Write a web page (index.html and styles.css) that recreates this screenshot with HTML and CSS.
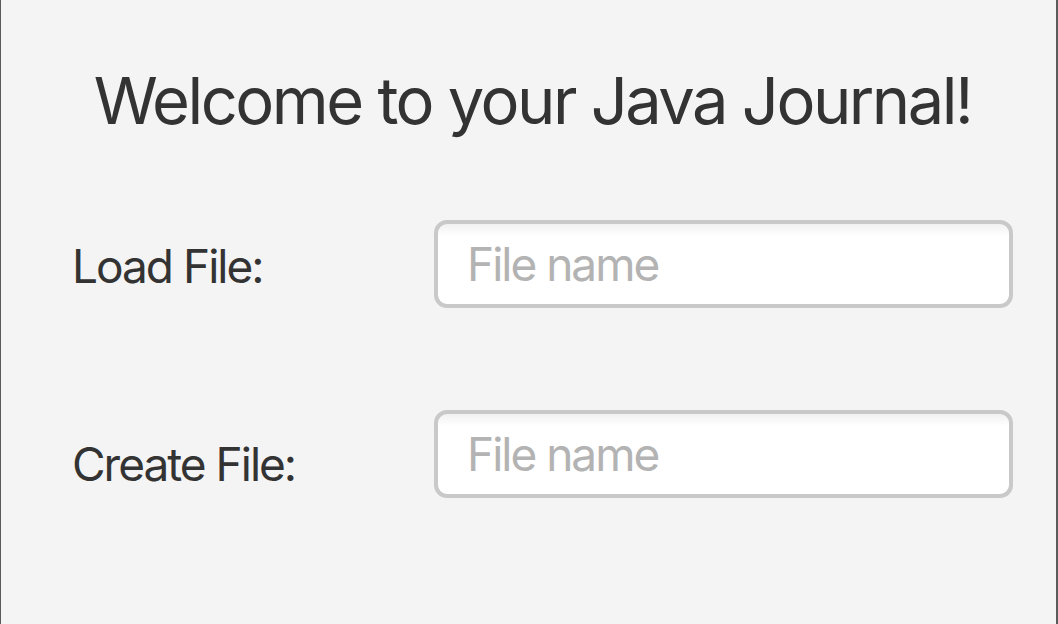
FILE: index.html
```html
<!DOCTYPE html>
<html lang="en">
<head>
<meta charset="utf-8">
<title>Java Journal</title>
<link rel="stylesheet" href="styles.css">
</head>
<body>
<main class="window">
  <h1 class="title">Welcome to your Java Journal!</h1>
  <div class="form">
    <div class="row row-load">
      <label class="label" for="load">Load File:</label>
      <input class="field" id="load" type="text" placeholder="File name">
    </div>
    <div class="row row-create">
      <label class="label" for="create">Create File:</label>
      <input class="field" id="create" type="text" placeholder="File name">
    </div>
  </div>
</main>
</body>
</html>
```

FILE: styles.css
```css
html, body {
  margin: 0;
  padding: 0;
  height: 100%;
  background: #f4f4f4;
}

.window {
  box-sizing: border-box;
  height: 624px;
  width: 1058px;
  background: #f4f4f4;
  border-left: 1px solid #5a5a5a;
  border-right: 2px solid #5a5a5a;
  font-family: Inter, "Noto Sans", "Liberation Sans", sans-serif;
  color: #333333;
  padding-top: 57px;
}

.title {
  margin: 0;
  font-weight: 400;
  font-size: 65px;
  line-height: 88px;
  letter-spacing: -2.5px;
  text-align: center;
  padding-left: 8px;
}

.form {
  display: flex;
  flex-direction: column;
  gap: 102px;
  margin-top: 75px;
  padding-left: 71px;
}

.row {
  display: grid;
  grid-template-columns: 362px 579px;
  align-items: center;
}

.label {
  font-size: 46px;
  letter-spacing: -2px;
  line-height: 88px;
  margin-top: 2px;
  margin-bottom: -2px;
}

.row-create .label {
  margin-top: 10px;
  margin-bottom: -10px;
}

.field {
  box-sizing: border-box;
  width: 579px;
  height: 88px;
  border: 4px solid #c9c9c9;
  border-radius: 13px;
  background: linear-gradient(#f1f1f1 0px, #ffffff 12px, #ffffff 100%);
  padding: 0 0 0 29px;
  font-family: inherit;
  font-size: 46px;
  letter-spacing: -2px;
  color: #333;
  outline: none;
}

.field::placeholder {
  color: #b3b3b3;
}
```
